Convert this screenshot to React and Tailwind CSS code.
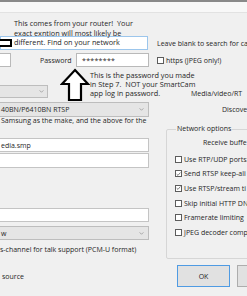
import React from 'react';

function Check({ checked }) {
  return (
    <span className="w-[7px] h-[7px] border border-[#5c5c5c] bg-white flex items-center justify-center shrink-0">
      {checked && (
        <svg viewBox="0 0 8 8" className="w-[6px] h-[6px]">
          <path d="M1 4.2 L3.2 6.2 L7 1.6" fill="none" stroke="#333" strokeWidth="1" />
        </svg>
      )}
    </span>
  );
}

function Chevron() {
  return (
    <svg viewBox="0 0 6 4" className="w-[5px] h-[3px] shrink-0">
      <path d="M0.5 0.5 L3 3 L5.5 0.5" fill="none" stroke="#8a8a8a" strokeWidth="0.9" />
    </svg>
  );
}

function CheckRow({ checked, label }) {
  return (
    <div className="flex items-center gap-[2px] h-[14.6px] whitespace-nowrap">
      <Check checked={checked} />
      <span>{label}</span>
    </div>
  );
}

export default function App() {
  return (
    <div className="relative w-[247px] h-[296px] overflow-hidden bg-[#f0f0f0] font-['Open_Sans',sans-serif] text-[7px] leading-none text-[#262626]">
      <div className="h-[2px] bg-[#8a8a8a]" />
      <div className="h-[11px] bg-[#f8f8f8] border-b border-[#e2e2e2]" />

      {/* host row */}
      <div className="mt-[23px] flex items-center h-[14px]">
        <div className="w-[148px] h-full bg-white border border-[#9cc6ec] shrink-0" />
        <span className="ml-[9px] whitespace-nowrap">Leave blank to search for ca</span>
      </div>

      {/* user / password row */}
      <div className="mt-[3px] flex items-center h-[14px]">
        <div className="w-[11px] h-full bg-white border border-l-0 border-[#b9b9b9] shrink-0" />
        <span className="ml-[29px] w-[36px] shrink-0">Password</span>
        <div className="w-[73px] h-full bg-white border border-[#b9b9b9] flex items-center pl-[5px] shrink-0 tracking-[0.3px]">
          ********
        </div>
        <div className="ml-[8px] flex items-center gap-[2px] whitespace-nowrap">
          <Check />
          <span>https (JPEG only!)</span>
        </div>
      </div>

      {/* make row */}
      <div className="mt-[18px] flex h-[13px]">
        <div className="w-[48px] h-full bg-[#e5e5e5] border border-l-0 border-[#bdbdbd] flex items-center justify-end pr-[3px] shrink-0">
          <Chevron />
        </div>
        <span className="ml-[143px] pt-[5px] whitespace-nowrap">Media/video/RT</span>
      </div>

      {/* model row */}
      <div className="mt-[4px] flex items-center h-[15px]">
        <div className="w-[149px] h-full bg-[#e5e5e5] border border-l-0 border-[#bdbdbd] flex items-center justify-between pl-[1px] pr-[4px] shrink-0">
          <span>40BN/P6410BN RTSP</span>
          <Chevron />
        </div>
        <span className="ml-[73px] whitespace-nowrap">Discove</span>
      </div>

      <div className="flex">
        {/* left column */}
        <div className="w-[149px] shrink-0 flex flex-col">
          <div className="h-[8px] leading-[8px] pl-[1px] mt-[0px] whitespace-nowrap">Samsung as the make, and the above for the</div>
          <div className="mt-[13px] h-[14px] bg-white border border-l-0 border-[#c4c4c4] flex items-center pl-[1px]">edia.smp</div>
          <div className="mt-[1px] h-[15px] bg-white border border-l-0 border-[#c4c4c4]" />
          <div className="mt-[40px] h-[14px] bg-white border border-l-0 border-[#c4c4c4]" />
          <div className="mt-[4px] h-[14px] bg-[#e5e5e5] border border-l-0 border-[#bdbdbd] flex items-center justify-between pl-[1px] pr-[4px]">
            <span>w</span>
            <Chevron />
          </div>
          <div className="mt-[6px] h-[8px] leading-[8px] whitespace-nowrap">s-channel for talk support (PCM-U format)</div>
          <div className="mt-[19px] h-[8px] leading-[8px] pl-[2px] whitespace-nowrap">source</div>
        </div>

        {/* right column */}
        <div className="pl-[17px] flex flex-col">
          <fieldset className="mt-[8px] w-[100px] h-[134px] border border-[#d6d6d6] rounded-[2px] pl-[8px]">
            <legend className="ml-[1px] px-[1px] leading-[8px] whitespace-nowrap">Network options</legend>
            <div className="pl-[28px] h-[8px] leading-[8px] mt-[6px] whitespace-nowrap">Receive buffe</div>
            <div className="mt-[5px]">
              <CheckRow label="Use RTP/UDP ports:" />
              <CheckRow checked label="Send RTSP keep-ali" />
              <CheckRow checked label="Use RTSP/stream ti" />
              <CheckRow label="Skip initial HTTP DN" />
              <CheckRow label="Framerate limiting" />
              <CheckRow label="JPEG decoder comp" />
            </div>
          </fieldset>
          <div className="mt-[6px] flex gap-[7px] pl-[11px]">
            <div className="w-[53px] h-[22px] bg-[#e1e1e1] border border-[#4f9be3] flex items-center justify-center shrink-0">OK</div>
            <div className="w-[53px] h-[22px] bg-[#e1e1e1] border border-[#adadad] shrink-0" />
          </div>
        </div>
      </div>

      {/* annotations drawn over the dialog */}
      <div className="absolute left-0 top-[39px] w-[12px] h-[8px] border-2 border-l-0 border-black bg-white" />
      <div className="absolute left-[14px] top-[19px] text-[7.3px] leading-[9.5px] whitespace-nowrap">
        <div>This comes from your router!&nbsp; Your</div>
        <div>exact exntion will most likely be</div>
        <div>different. Find on your network</div>
      </div>
      <svg className="absolute left-[60px] top-[68px] w-[30px] h-[34px]" viewBox="0 0 30 34">
        <path d="M15 2 L28 16 L21 16 L21 32 L9 32 L9 16 L2 16 Z" fill="#fff" stroke="#000" strokeWidth="2.2" strokeLinejoin="miter" />
      </svg>
      <div className="absolute left-[90px] top-[71px] text-[7.3px] leading-[9px] whitespace-nowrap">
        <div>This is the password you made</div>
        <div>in Step 7.&nbsp; NOT your SmartCam</div>
        <div>app log in password.</div>
      </div>
    </div>
  );
}
